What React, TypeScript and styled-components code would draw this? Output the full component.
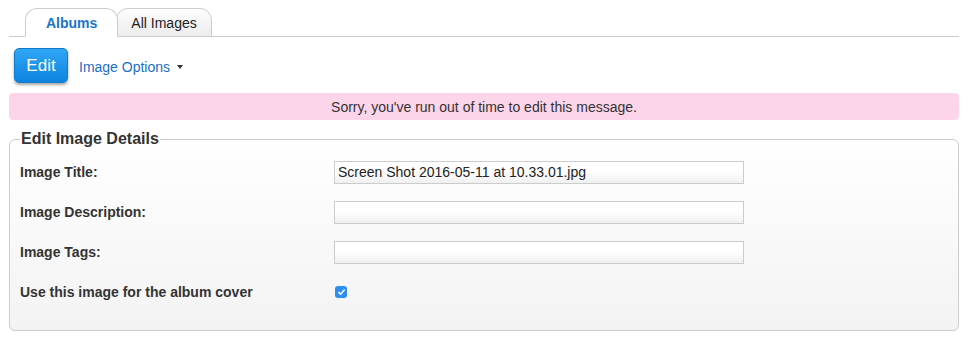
import React, { useState } from 'react';
import styled, { createGlobalStyle } from 'styled-components';

const GlobalStyle = createGlobalStyle` body { margin: 0; background: #fff; font-family: "Liberation Sans", Arial, sans-serif; color: #333; } `;

const Page = styled.div` padding: 8px 11px 0 9px; width: 950px; `;
const TabBar = styled.div` display: flex; align-items: flex-end; height: 28px; padding-left: 16px; border-bottom: 1px solid #ccc; `;
const Tab = styled.div<{ $active?: boolean }>`
    position: relative; height: 27px; margin-bottom: -1px; padding: 0 ${p => (p.$active ? '20px' : '14px')};
    display: flex; align-items: center; font-size: 14px;
    font-weight: ${p => (p.$active ? 'bold' : 'normal')};
    color: ${p => (p.$active ? '#1a73cc' : '#222')};
    background: ${p => (p.$active ? '#fff' : 'linear-gradient(#fdfdfd, #ececec)')};
    border: 1px solid #ccc; border-bottom-color: ${p => (p.$active ? '#fff' : '#ccc')};
    border-radius: 12px 12px 0 0; margin-right: -2px; z-index: ${p => (p.$active ? 2 : 1)};
`;
const Toolbar = styled.div` display: flex; align-items: center; gap: 11px; padding: 11px 0 0 5px; height: 35px; `;
const EditButton = styled.button`
    width: 54px; height: 35px; border-radius: 5px; border: 1px solid #1479c8;
    background: linear-gradient(#2fa6f5, #0d84e0); color: #fff; font-size: 17px;
    font-family: "Liberation Sans", Arial, sans-serif; box-shadow: 0 2px 3px rgba(0,0,0,0.35); cursor: pointer;
`;
const OptionsLink = styled.a` display: flex; align-items: center; gap: 7px; color: #1a6fc9; font-size: 14px; cursor: pointer; padding-top: 3px; `;
const Caret = styled.span` width: 0; height: 0; border-left: 3.5px solid transparent; border-right: 3.5px solid transparent; border-top: 4px solid #333; `;
const Notice = styled.div` margin-top: 10px; height: 27px; border-radius: 4px; background: #fdd5ea; display: flex; align-items: center; justify-content: center; font-size: 14px; color: #333; `;
const Fieldset = styled.fieldset`
    margin: 10px 0 0 0; padding: 4px 10px 18px 10px; border: 1px solid #ccc; border-radius: 6px;
    background: linear-gradient(#fff, #f3f3f3); box-sizing: border-box;
`;
const Legend = styled.legend` font-size: 16px; font-weight: bold; color: #333; padding: 0 1px; `;
const Row = styled.div` display: grid; grid-template-columns: 314px 410px; align-items: center; height: 40px; `;
const Label = styled.label` font-size: 14px; font-weight: bold; color: #333; `;
const TextInput = styled.input`
    height: 23px; box-sizing: border-box; border: 1px solid #ccc; padding: 0 3px;
    font-size: 14px; font-family: "Liberation Sans", Arial, sans-serif; color: #222;
    background: linear-gradient(#fff 40%, #f0f0f0);
`;
const Check = styled.span` width: 12px; height: 12px; border-radius: 3px; background: #2b8ef2; display: flex; align-items: center; justify-content: center; margin-left: 1px; `;

export default function App() {
    const [title, setTitle] = useState('Screen Shot 2016-05-11 at 10.33.01.jpg');
    const [desc, setDesc] = useState('');
    const [tags, setTags] = useState('');
    return (
        <Page>
            <GlobalStyle />
            <TabBar>
                <Tab $active>Albums</Tab>
                <Tab>All Images</Tab>
            </TabBar>
            <Toolbar>
                <EditButton>Edit</EditButton>
                <OptionsLink>Image Options <Caret /></OptionsLink>
            </Toolbar>
            <Notice>Sorry, you've run out of time to edit this message.</Notice>
            <Fieldset>
                <Legend>Edit Image Details</Legend>
                <Row>
                    <Label>Image Title:</Label>
                    <TextInput value={title} onChange={e => setTitle(e.target.value)} />
                </Row>
                <Row>
                    <Label>Image Description:</Label>
                    <TextInput value={desc} onChange={e => setDesc(e.target.value)} />
                </Row>
                <Row>
                    <Label>Image Tags:</Label>
                    <TextInput value={tags} onChange={e => setTags(e.target.value)} />
                </Row>
                <Row>
                    <Label>Use this image for the album cover</Label>
                    <Check>
                        <svg width="9" height="8" viewBox="0 0 9 8"><path d="M1.5 4.2 L3.6 6.2 L7.6 1.6" stroke="#fff" strokeWidth="1.6" fill="none" /></svg>
                    </Check>
                </Row>
            </Fieldset>
        </Page>
    );
}
